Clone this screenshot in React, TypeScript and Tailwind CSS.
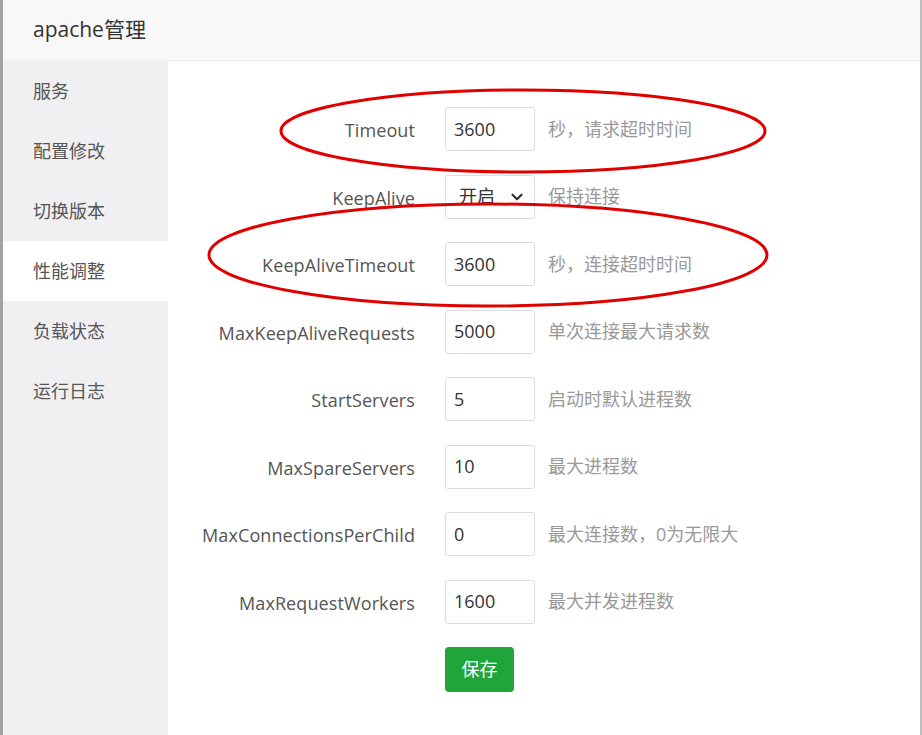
import { ChevronDown } from "lucide-react";

const FONT = { fontFamily: '"Open Sans", "Noto Sans CJK SC", sans-serif' };

const MENU = ["服务", "配置修改", "切换版本", "性能调整", "负载状态", "运行日志"];

type Row = { label: string; value: string; hint: string; select?: boolean };

const ROWS: Row[] = [
  { label: "Timeout", value: "3600", hint: "秒，请求超时时间" },
  { label: "KeepAlive", value: "开启", hint: "保持连接", select: true },
  { label: "KeepAliveTimeout", value: "3600", hint: "秒，连接超时时间" },
  { label: "MaxKeepAliveRequests", value: "5000", hint: "单次连接最大请求数" },
  { label: "StartServers", value: "5", hint: "启动时默认进程数" },
  { label: "MaxSpareServers", value: "10", hint: "最大进程数" },
  { label: "MaxConnectionsPerChild", value: "0", hint: "最大连接数，0为无限大" },
  { label: "MaxRequestWorkers", value: "1600", hint: "最大并发进程数" },
];

function FormRow({ row }: { row: Row }) {
  return (
    <div className="flex items-center h-[44px]">
      <div className="w-[247px] text-right text-[18px] text-[#555] pt-[3px] tracking-[0.1px]">{row.label}</div>
      {row.select ? (
        <div className="ml-[30px] w-[90px] h-[44px] border border-[#ddd] rounded-[3px] flex items-center justify-between pl-[13px] pr-[8px] text-[18px] text-[#333]">
          <span>{row.value}</span>
          <ChevronDown size={18} strokeWidth={3} className="text-[#333]" />
        </div>
      ) : (
        <div className="ml-[30px] w-[90px] h-[44px] border border-[#ddd] rounded-[3px] flex items-center px-[8px] text-[18px] text-[#333]">
          {row.value}
        </div>
      )}
      <div className="ml-[13px] text-[18px] text-[#999]">{row.hint}</div>
    </div>
  );
}

export default function App() {
  return (
    <div className="relative w-[922px] h-[735px] flex bg-white overflow-hidden" style={FONT}>
      <div className="w-[3px] bg-[#a3a3a3]" />
      <div className="flex-1 flex flex-col">
        <div className="h-[61px] bg-[#f8f8f8] border-b border-[#eee] flex items-center pl-[30px] text-[21px] text-[#333]">
          apache管理
        </div>
        <div className="flex-1 flex">
          <div className="w-[165px] bg-[#f0f0f2] flex flex-col">
            {MENU.map((m) => (
              <div
                key={m}
                className={`h-[60px] flex items-center pl-[30px] text-[18px] text-[#555] ${
                  m === "性能调整" ? "bg-white" : ""
                }`}
              >
                {m}
              </div>
            ))}
          </div>
          <div className="flex-1 bg-white pt-[46px] flex flex-col gap-[23.5px]">
            {ROWS.map((r) => (
              <FormRow key={r.label} row={r} />
            ))}
            <div className="pl-[277px]">
              <button className="w-[69px] h-[45px] bg-[#20a53a] rounded-[4px] text-white text-[18px]">
                保存
              </button>
            </div>
          </div>
        </div>
      </div>
      <div className="w-[2px] bg-[#bdbdbd]" />
      <svg className="absolute inset-0 pointer-events-none" width="922" height="735">
        <ellipse cx="523" cy="131" rx="242" ry="41" fill="none" stroke="#e00000" strokeWidth="3" />
        <ellipse cx="488" cy="255" rx="279" ry="51" fill="none" stroke="#e00000" strokeWidth="3" />
      </svg>
    </div>
  );
}
